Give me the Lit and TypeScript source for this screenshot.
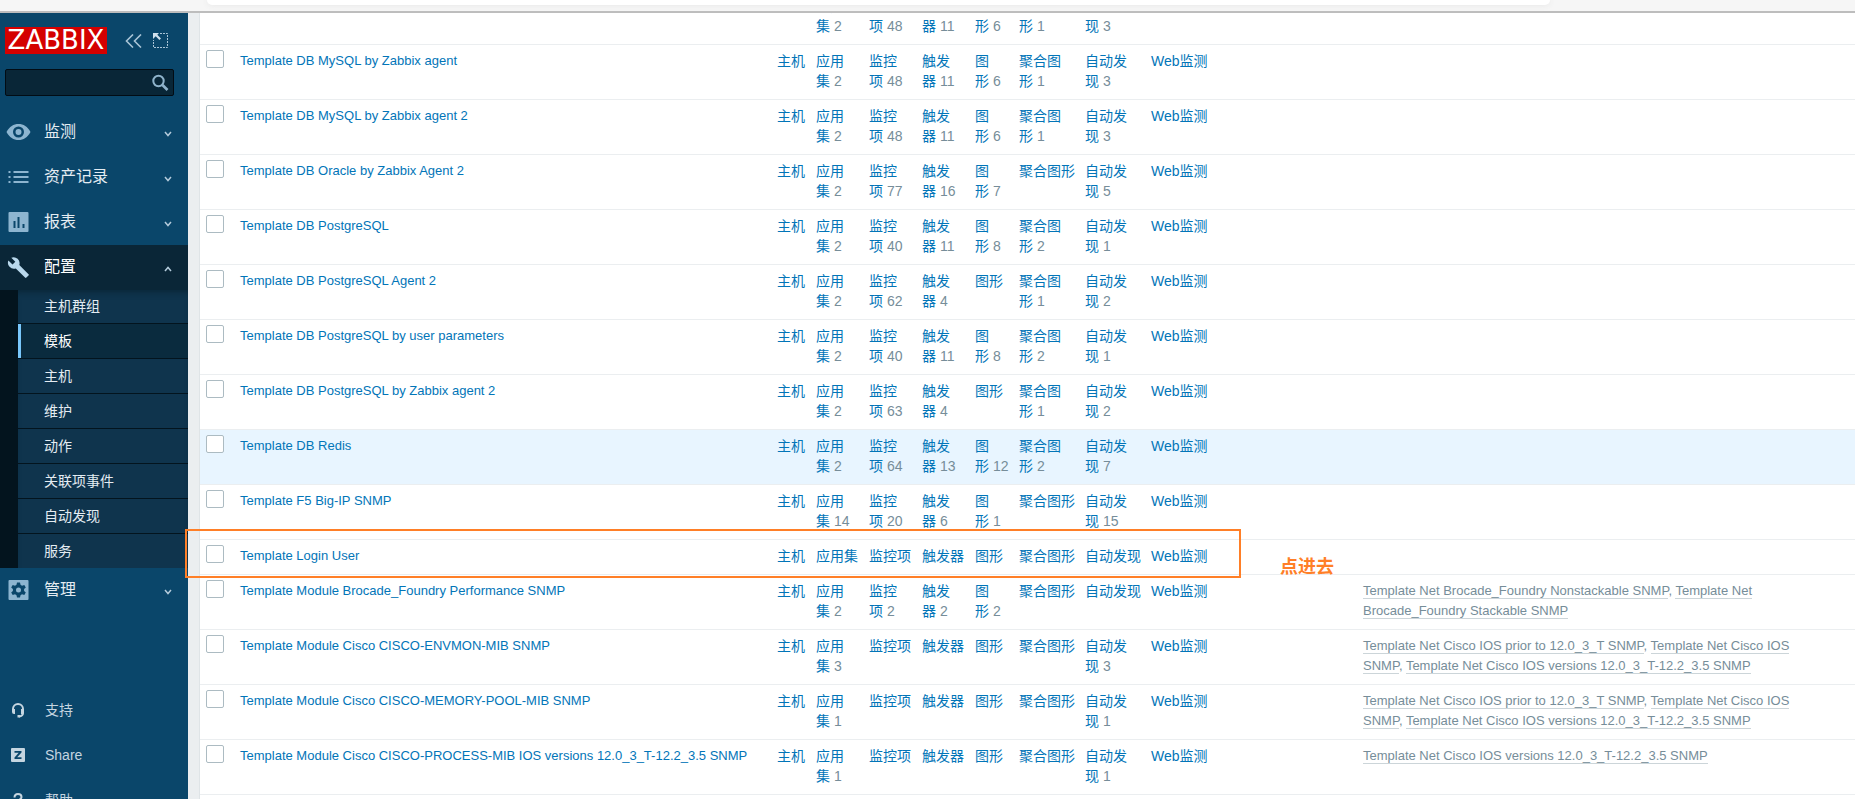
import { LitElement, html, css, svg, nothing } from "lit";
import { customElement } from "lit/decorators.js";
import { classMap } from "lit/directives/class-map.js";

type Counts = (number | null)[];

interface Template {
  name: string;
  counts: Counts;
  parents?: string[];
  hover?: boolean;
}

const COLUMNS = ["应用集", "监控项", "触发器", "图形", "聚合图形", "自动发现"];

const IOS_PARENTS = [
  "Template Net Cisco IOS prior to 12.0_3_T SNMP",
  "Template Net Cisco IOS SNMP",
  "Template Net Cisco IOS versions 12.0_3_T-12.2_3.5 SNMP",
];

const TEMPLATES: Template[] = [
  { name: "Template DB MySQL", counts: [2, 48, 11, 6, 1, 3] },
  { name: "Template DB MySQL by Zabbix agent", counts: [2, 48, 11, 6, 1, 3] },
  { name: "Template DB MySQL by Zabbix agent 2", counts: [2, 48, 11, 6, 1, 3] },
  { name: "Template DB Oracle by Zabbix Agent 2", counts: [2, 77, 16, 7, null, 5] },
  { name: "Template DB PostgreSQL", counts: [2, 40, 11, 8, 2, 1] },
  { name: "Template DB PostgreSQL Agent 2", counts: [2, 62, 4, null, 1, 2] },
  { name: "Template DB PostgreSQL by user parameters", counts: [2, 40, 11, 8, 2, 1] },
  { name: "Template DB PostgreSQL by Zabbix agent 2", counts: [2, 63, 4, null, 1, 2] },
  { name: "Template DB Redis", counts: [2, 64, 13, 12, 2, 7], hover: true },
  { name: "Template F5 Big-IP SNMP", counts: [14, 20, 6, 1, null, 15] },
  { name: "Template Login User", counts: [null, null, null, null, null, null] },
  {
    name: "Template Module Brocade_Foundry Performance SNMP",
    counts: [2, 2, 2, 2, null, null],
    parents: [
      "Template Net Brocade_Foundry Nonstackable SNMP",
      "Template Net Brocade_Foundry Stackable SNMP",
    ],
  },
  {
    name: "Template Module Cisco CISCO-ENVMON-MIB SNMP",
    counts: [3, null, null, null, null, 3],
    parents: IOS_PARENTS,
  },
  {
    name: "Template Module Cisco CISCO-MEMORY-POOL-MIB SNMP",
    counts: [1, null, null, null, null, 1],
    parents: IOS_PARENTS,
  },
  {
    name: "Template Module Cisco CISCO-PROCESS-MIB IOS versions 12.0_3_T-12.2_3.5 SNMP",
    counts: [1, null, null, null, null, 1],
    parents: [IOS_PARENTS[2]],
  },
];

const ICONS = {
  eye: svg`<path fill-rule="evenodd" d="M0 11C3 5.500 7 3 12 3s9 2.500 12 8c-3 5.500-7 8-12 8S3 16.500 0 11zm12-5.500a5.500 5.500 0 1 0 0 11 5.500 5.500 0 0 0 0-11zm0 2.500a3 3 0 1 1 0 6 3 3 0 0 1 0-6z"/>`,
  list: svg`<path d="M2 5h2v2H2zM7 5h15v2H7zM2 10h2v2H2zM7 10h15v2H7zM2 15h2v2H2zM7 15h15v2H7z"/>`,
  chart: svg`<path fill-rule="evenodd" d="M3 1h18q1 0 1 1v18q0 1-1 1H3q-1 0-1-1V2q0-1 1-1zm4 9v7h2v-7zm4-4v11h2V6zm5 7v4h2v-4z"/>`,
  wrench: svg`<path d="M22 18.200 12.800 9a6 6 0 0 0-8-7.300l4 4-2.800 2.800-4.100-4a6 6 0 0 0 7.400 8l9.200 9.100q.7.700 1.400 0l2.100-2.100q.8-.7 0-1.300z"/>`,
  gear: svg`<path fill-rule="evenodd" d="M3 1h18q1 0 1 1v18q0 1-1 1H3q-1 0-1-1V2q0-1 1-1zm7.500 2.500-.5 2.300-1.500.9-2.300-.7-1.500 2.600L6.400 10v2l-1.700 1.500 1.500 2.600 2.300-.8 1.500.9.500 2.300h3l.5-2.300 1.500-.9 2.300.8 1.500-2.600-1.700-1.500v-2l1.700-1.500L17.800 6l-2.300.7-1.500-.9-.5-2.300zM12 8.500a2.500 2.500 0 1 1 0 5 2.500 2.500 0 0 1 0-5z"/>`,
};

const MENU = [
  { label: "监测", icon: ICONS.eye },
  { label: "资产记录", icon: ICONS.list },
  { label: "报表", icon: ICONS.chart },
  {
    label: "配置",
    icon: ICONS.wrench,
    children: ["主机群组", "模板", "主机", "维护", "动作", "关联项事件", "自动发现", "服务"],
  },
  { label: "管理", icon: ICONS.gear },
];

@customElement("zbx-sidebar")
class ZbxSidebar extends LitElement {
  static styles = css`
    :host { display: block; background: #0a466a; color: #e4ecf2; overflow: hidden; }
    a { color: inherit; text-decoration: none; }
    ul { list-style: none; margin: 0; padding: 0; }
    button { border: 0; padding: 0; background: none; display: flex; color: #a9c4d6; }
    .head { display: flex; align-items: center; padding: 14px 0 0 5px; }
    .logo { flex: none; background: #d40000; color: #fff; font: 26px/27px "DejaVu Sans", sans-serif; width: 102px; text-align: center; }
    .collapse { margin-left: 18px; }
    .kiosk { margin-left: 11px; }
    .search { display: flex; align-items: center; margin: 15px 14px 0 5px; height: 25px; border: 1px solid #020c14; border-radius: 2px; background: #092637; }
    .search input { flex: 1; min-width: 0; border: 0; outline: 0; background: none; color: #fff; font: inherit; padding: 0 5px; }
    .search button { margin-right: 4px; color: #8fb3cb; }
    .menu { margin-top: 14px; font-size: 16px; }
    .item { display: flex; align-items: center; height: 45px; padding: 0 16px 2px 6px; box-sizing: border-box; }
    .item .icon { width: 25px; height: 22px; fill: #8db5d0; margin-right: 13px; }
    .item .label { flex: 1; }
    .item.open { background: #0a2637; color: #fff; }
    .item.open .icon { fill: #b9d8ec; }
    .chevron { fill: none; stroke: #b4cbdb; stroke-width: 1.5; margin-top: 4px; }
    .sub { border-left: 18px solid #03141e; font-size: 14px; background: #0f344d; box-shadow: inset 0 6px 6px -4px #0a2637; }
    .sub li + li { border-top: 1px solid #03141e; }
    .sub a { display: block; line-height: 34px; padding-left: 26px; }
    .sub li:first-child a { line-height: 33px; }
    .sub a.active { background: #0a2b3e; border-left: 3px solid #79c7fb; padding-left: 23px; color: #fff; }
    .foot { margin-top: 74px; font-size: 14px; color: #c5d5e0; }
    .foot a { display: flex; align-items: center; height: 45px; padding-left: 10px; }
    .foot svg { width: 16px; height: 16px; margin-right: 19px; fill: #c5d5e0; }
    .foot .line { fill: none; stroke: #c5d5e0; stroke-width: 2; }
  `;

  private renderItem(item: (typeof MENU)[number]) {
    const open = !!item.children;
    return html`<li>
      <a href="#" class=${classMap({ item: true, open })}>
        <svg class="icon" viewBox="0 0 24 22">${item.icon}</svg>
        <span class="label">${item.label}</span>
        <svg class="chevron" width="8" height="6" viewBox="0 0 8 6">
          <path d=${open ? "M1 5l3-3.500L7 5" : "M1 1l3 3.500L7 1"} />
        </svg>
      </a>
      ${item.children
        ? html`<ul class="sub">
            ${item.children.map(
              (c) => html`<li><a href="#" class=${classMap({ active: c === "模板" })}>${c}</a></li>`
            )}
          </ul>`
        : nothing}
    </li>`;
  }

  render() {
    return html`
      <div class="head">
        <span class="logo">ZABBIX</span>
        <button class="collapse" aria-label="折叠">
          <svg width="17" height="14" viewBox="0 0 17 14" fill="none" stroke="currentColor" stroke-width="1.600"><path d="M8 .5 1.500 7 8 13.500M16 .5 9.500 7l6.500 6.500" /></svg>
        </button>
        <button class="kiosk" aria-label="隐藏">
          <svg width="15" height="15" viewBox="0 0 15 15"><path d="M7 .5h7.500v14H.5V7" fill="none" stroke="currentColor" stroke-width="1" stroke-dasharray="2 1" /><path d="M0 0h6L4.300 1.700 8 5.400 6.400 7 2.700 3.300 0 6z" fill="#cfe0ec" /></svg>
        </button>
      </div>
      <div class="search">
        <input type="text" aria-label="搜索" />
        <button aria-label="搜索">
          <svg width="18" height="18" viewBox="0 0 18 18" fill="none" stroke="currentColor" stroke-width="2"><circle cx="7.500" cy="7" r="5.200" /><path d="m11.500 11 5 5" stroke-width="2.600" /></svg>
        </button>
      </div>
      <ul class="menu">${MENU.map((m) => this.renderItem(m))}</ul>
      <div class="foot">
        <a href="#"><svg viewBox="0 0 16 16"><path class="line" d="M3 9V7a5 5 0 0 1 10 0v4q0 3-4 3.500" /><path d="M2 7h3v5H4q-2 0-2-2zM14 7h-3v5h1q2 0 2-2zM7.500 13H10v2.500H7.500z" /></svg>支持</a>
        <a href="#"><svg viewBox="0 0 16 16"><path fill-rule="evenodd" d="M2 1h12q1 0 1 1v12q0 1-1 1H2q-1 0-1-1V2q0-1 1-1zm2.500 3v1.800h4.200L4.500 10.500V12h7v-1.800H7.200l4.300-4.700V4z" /></svg>Share</a>
        <a href="#"><svg viewBox="0 0 16 16"><path class="line" d="M4.500 5.500q0-3.500 3.500-3.500t3.500 3Q11.500 7 8 8.500V11M8 13v2" /></svg>帮助</a>
      </div>
    `;
  }
}

@customElement("zbx-templates")
class ZbxTemplates extends LitElement {
  static styles = css`
    :host { display: block; overflow: hidden; background: #fff; border-left: 1px solid #dfe4e7; }
    table { margin-top: -23px; width: 100%; table-layout: fixed; border-collapse: separate; border-spacing: 0; line-height: 20px; }
    td { padding: 6px 4px 8px 5px; border-bottom: 1px solid #ebeef0; vertical-align: top; color: #768d99; }
    .c-check { width: 35px; }
    .c-name { width: 537px; }
    .c-host { width: 39px; }
    .c-three { width: 53px; }
    .c-graph { width: 44px; }
    .c-four { width: 66px; }
    .c-web { width: 70px; }
    .c-linked { width: 142px; }
    .c-tags { width: 40px; }
    .check { padding: 5px 0 0 6px; }
    .name, .web { white-space: nowrap; }
    .name, .parents { font-size: 13px; }
    input { appearance: none; display: block; box-sizing: border-box; width: 18px; height: 18px; margin: 0; border: 1px solid #acbbc2; border-radius: 2px; background: #fff; }
    a { color: #0275b8; text-decoration: none; }
    .hover td { background: #e8f5ff; }
    .parents a { color: #768d99; border-bottom: 1px solid #ccd5d9; }
  `;

  private renderRow(t: Template, i: number) {
    return html`<tr class=${classMap({ hover: !!t.hover })}>
      <td class="check"><input type="checkbox" id="t${i}" aria-label=${t.name} /></td>
      <td class="name"><a href="#">${t.name}</a></td>
      <td><a href="#">主机</a></td>
      ${COLUMNS.map((c, k) => {
        const n = t.counts[k];
        return html`<td><a href="#">${c}</a>${n === null ? nothing : `\u00a0${n}`}</td>`;
      })}
      <td class="web"><a href="#">Web监测</a></td>
      <td></td>
      <td class="parents">${(t.parents ?? []).map((p, k) => html`${k ? ", " : ""}<a href="#">${p}</a>`)}</td>
      <td></td>
    </tr>`;
  }

  render() {
    return html`<table>
      <colgroup>
        <col class="c-check" /><col class="c-name" /><col class="c-host" />
        <col class="c-three" /><col class="c-three" /><col class="c-three" />
        <col class="c-graph" /><col class="c-four" /><col class="c-four" />
        <col class="c-web" /><col class="c-linked" /><col /><col class="c-tags" />
      </colgroup>
      <tbody>${TEMPLATES.map((t, i) => this.renderRow(t, i))}</tbody>
    </table>`;
  }
}

@customElement("app-root")
class AppRoot extends LitElement {
  static styles = css`
    :host { display: flex; flex-direction: column; height: 100vh; overflow: hidden; font: 14px/20px "Liberation Sans", Arial, "Noto Sans CJK SC", sans-serif; background: #ebeef0; }
    .browser { flex: none; height: 11px; padding: 0 305px 0 207px; background: #f6f6f6; border-bottom: 2px solid #bdbdbd; }
    .address { height: 5px; background: #fff; border-radius: 0 0 6px 6px; box-shadow: 0 0 6px #e4e4e4; }
    .page { position: relative; flex: 1; min-height: 0; display: grid; grid-template-columns: 188px minmax(0, 1fr); column-gap: 11px; }
    .mark { position: absolute; left: 185px; top: 516px; width: 1056px; height: 49px; box-sizing: border-box; border: 2px solid #ff7f27; }
    .note { position: absolute; left: 1280px; top: 543px; font-size: 18px; font-weight: bold; line-height: 22px; color: #ff7f27; }
  `;

  render() {
    return html`
      <div class="browser"><div class="address"></div></div>
      <div class="page">
        <zbx-sidebar></zbx-sidebar>
        <zbx-templates></zbx-templates>
        <div class="mark"></div>
        <div class="note">点进去</div>
      </div>
    `;
  }
}
